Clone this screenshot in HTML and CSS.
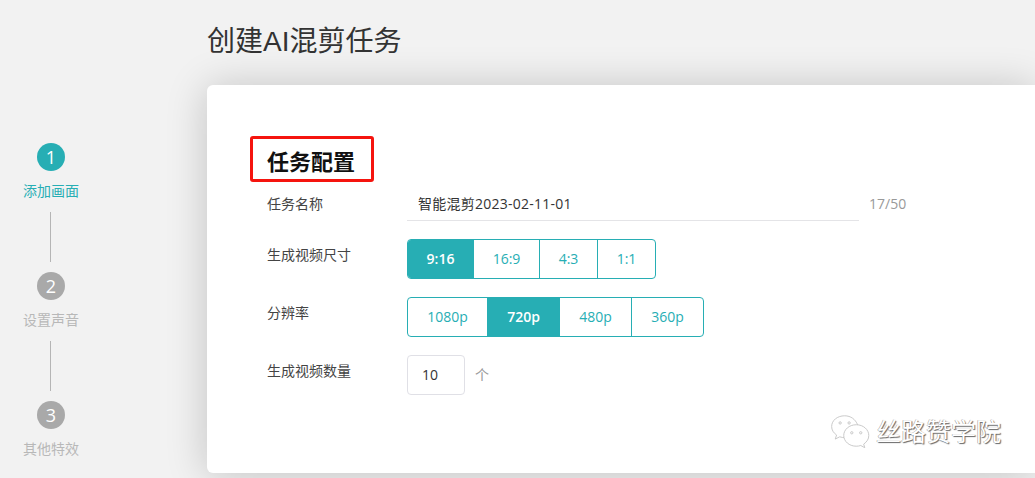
FILE: index.html
```html
<!DOCTYPE html>
<html lang="zh-CN">
<head>
<meta charset="utf-8">
<title>创建AI混剪任务</title>
<link rel="stylesheet" href="styles.css">
</head>
<body>
<div class="page">
  <aside class="steps">
    <div class="step active"><span class="num">1</span><span class="step-label">添加画面</span></div>
    <div class="connector"></div>
    <div class="step"><span class="num">2</span><span class="step-label">设置声音</span></div>
    <div class="connector"></div>
    <div class="step"><span class="num">3</span><span class="step-label">其他特效</span></div>
  </aside>
  <main class="main">
    <h1 class="title">创建AI混剪任务</h1>
    <section class="card">
      <h2 class="section-title">任务配置</h2>
      <div class="row row-name">
        <div class="label">任务名称</div>
        <div class="name-input">智能混剪2023-02-11-01</div>
        <div class="counter">17/50</div>
      </div>
      <div class="row">
        <div class="label">生成视频尺寸</div>
        <div class="seg">
          <div class="seg-item on w65">9:16</div>
          <div class="seg-item w66">16:9</div>
          <div class="seg-item w58">4:3</div>
          <div class="seg-item w58">1:1</div>
        </div>
      </div>
      <div class="row">
        <div class="label">分辨率</div>
        <div class="seg">
          <div class="seg-item w79">1080p</div>
          <div class="seg-item on w72">720p</div>
          <div class="seg-item w72">480p</div>
          <div class="seg-item w72">360p</div>
        </div>
      </div>
      <div class="row">
        <div class="label">生成视频数量</div>
        <div class="num-input">10</div>
        <div class="unit">个</div>
      </div>
    </section>
  </main>
</div>
<div class="watermark">
  <svg class="wm-icon" width="40" height="34" viewBox="0 0 44 38" fill="none" stroke="#c4c4c4" stroke-width="1">
    <path fill="#fff" d="M16 2C8 2 1.500 7 1.500 14c0 4 2 7 5.500 9.500L5.500 28l5-2.500c2 .6 4 1 6 1 1 0 2 0 3-.2C26 25 31 18 30.500 12 28 6 23 2 16 2z"/>
    <circle cx="11" cy="10" r="1.300"/><circle cx="21" cy="10" r="1.300"/>
    <path fill="#fff" d="M29 12c-8 0-14 5.500-14 12s6 12 14 12c2 0 3.500-.3 5-.8l4.500 2.500-1.200-4C41 31 43 28 43 24c0-6.500-6-12-14-12z"/>
    <circle cx="24" cy="21" r="1.300"/><circle cx="34" cy="21" r="1.300"/>
  </svg>
  <span class="wm-text">丝路赞学院</span>
</div>
</body>
</html>
```
FILE: styles.css
```css
* { box-sizing: border-box; }
html, body { margin: 0; height: 100%; overflow: hidden; }
body {
  background: #f2f2f2;
  font-family: "Open Sans", "Noto Sans CJK SC", sans-serif;
  color: #333;
  position: relative;
}
.page { display: flex; height: 478px; }
.steps {
  width: 207px;
  flex: none;
  padding: 143px 0 0 0;
  display: flex;
  flex-direction: column;
  align-items: flex-start;
}
.step { width: 102px; display: flex; flex-direction: column; align-items: center; }
.num {
  width: 28px; height: 28px; border-radius: 50%;
  background: #a9a9a9; color: #fff;
  font-size: 18px; line-height: 28px; text-align: center;
}
.step.active .num { background: #27aeb4; }
.step-label {
  margin-top: 10px;
  font-size: 14px; line-height: 20px;
  color: #b8b8b8;
}
.step.active .step-label { color: #27aeb4; }
.connector {
  width: 1px; height: 50px;
  background: #b5b5b5;
  margin: 11px 0 10px 50px;
}
.main { flex: 1; min-width: 0; }
.title {
  margin: 0;
  height: 85px;
  padding-top: 22px;
  font-size: 28px;
  line-height: 40px;
  font-weight: 400;
  color: #333;
  font-family: "Liberation Sans", "Noto Sans CJK SC", sans-serif;
}
.card {
  height: 388px;
  background: #fff;
  border-radius: 6px 0 0 6px;
  padding: 51px 0 0 43px;
  box-shadow: 0 2px 42px rgba(0, 0, 0, .2);
}
.section-title {
  margin: 0 0 5px;
  width: 124px; height: 46px;
  border: 3px solid #f5140e;
  border-radius: 3px;
  padding-left: 14px;
  font-size: 22px;
  line-height: 44px;
  font-weight: 700;
  color: #111;
}
.row {
  display: flex;
  align-items: flex-start;
  margin-bottom: 18px;
  padding-left: 17px;
}
.label {
  width: 140px; flex: none;
  font-size: 14px; line-height: 32px;
  color: #444;
}
.row-name .label { line-height: 33px; }
.name-input {
  width: 452px; height: 34px;
  border-bottom: 1px solid #e4e4e7;
  padding-left: 11px;
  font-size: 14px; line-height: 33px;
  letter-spacing: .25px;
  color: #333;
}
.counter { margin-left: 10px; font-size: 14px; line-height: 34px; color: #999; }
.seg {
  display: flex;
  height: 40px;
  border: 1px solid #27aeb4;
  border-radius: 4px;
  overflow: hidden;
}
.seg-item {
  border-left: 1px solid #27aeb4;
  text-align: center;
  font-size: 14px; line-height: 38px;
  color: #27aeb4;
}
.seg-item:first-child { border-left: 0; }
.seg-item.on { background: #27aeb4; color: #fff; font-weight: 600; }
.w58 { width: 58px; }
.w65 { width: 65px; }
.w66 { width: 66px; }
.w72 { width: 72px; }
.w79 { width: 79px; }
.num-input {
  width: 58px; height: 40px;
  border: 1px solid #e0e0e6;
  border-radius: 4px;
  padding-left: 14px;
  font-size: 14px; line-height: 38px;
  color: #333;
}
.unit { margin-left: 10px; font-size: 14px; line-height: 40px; color: #999; }
.watermark {
  position: absolute;
  left: 830px; top: 413px;
  display: flex;
  align-items: center;
  gap: 6px;
}
.wm-text {
  font-size: 25px;
  line-height: 36px;
  color: #fff;
  text-shadow: 1px 1px 1px #666, -0.5px 0 0 #999;
}
```
